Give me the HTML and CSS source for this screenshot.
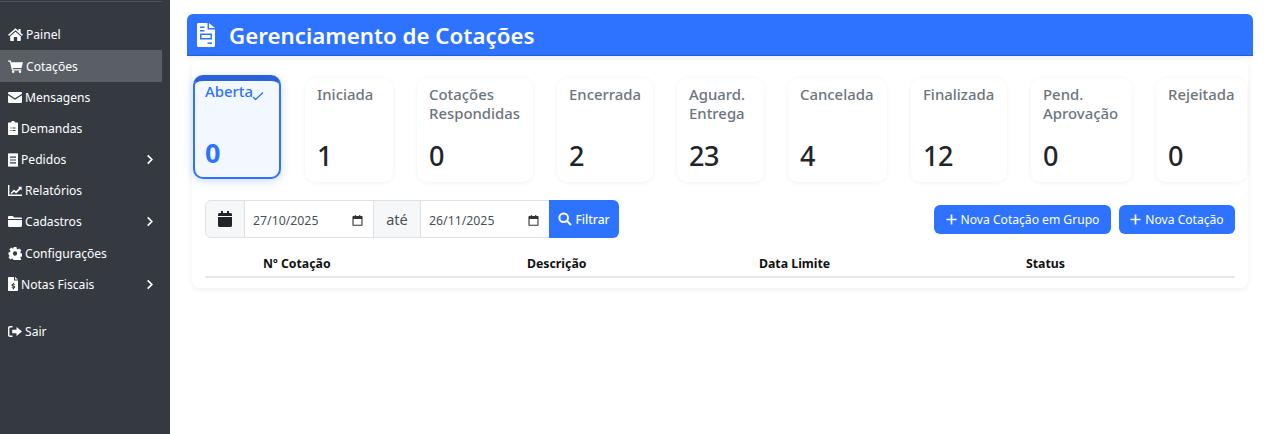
FILE: index.html
```html
<!DOCTYPE html>
<html lang="pt-BR">
<head>
<meta charset="utf-8">
<title>Gerenciamento de Cotações</title>
<link rel="stylesheet" href="styles.css">
</head>
<body>
<div class="app">
  <aside class="sidebar">
    <nav class="menu">
      <a class="item"><svg class="ic ic-15" viewBox="0 0 16 14"><path d="M8 .3 0 7.300l1 1.200L8 2.500l7 6 1-1.200-2.500-2.200V1h-2.300v2.100z"/><path d="M2.300 9 8 4l5.700 5v4.300c0 .4-.3.700-.7.700H9.800V9.800H6.200V14H3c-.4 0-.7-.3-.7-.7z"/></svg>Painel</a>
      <a class="item active"><svg class="ic ic-15" viewBox="0 0 16 14"><path d="M0 .6h3l.5 1.800H16l-1.500 6.200H5l.3 1.300h9v1.300H4.200L2 1.900H0z"/><circle cx="5.500" cy="12.700" r="1.300"/><circle cx="12.800" cy="12.700" r="1.300"/></svg>Cotações</a>
      <a class="item"><svg class="ic ic-14" viewBox="0 0 14 11"><path d="M1 0h12a1 1 0 0 1 1 1v.7L7 6.200 0 1.700V1a1 1 0 0 1 1-1z"/><path d="M0 3.200 7 7.700l7-4.500V10a1 1 0 0 1-1 1H1a1 1 0 0 1-1-1z"/></svg>Mensagens</a>
      <a class="item"><svg class="ic ic-9" viewBox="0 0 10 14"><path fill-rule="evenodd" d="M3 1.500C3 .7 3.900 0 5 0s2 .7 2 1.500h2c.6 0 1 .4 1 1V13c0 .6-.4 1-1 1H1c-.6 0-1-.4-1-1V2.500c0-.6.4-1 1-1zM2.500 6.500v1h1v-1zm2 0v1h3v-1zm-2 2.500v1h1V9zm2 0v1h3V9z"/></svg>Demandas</a>
      <a class="item"><svg class="ic ic-9" viewBox="0 0 10 14"><path fill-rule="evenodd" d="M0 0l1 .8L2 0l1 .8L4 0l1 .8L6 0l1 .8L8 0l1 .8L10 0v14l-1-.8-1 .8-1-.8-1 .8-1-.8-1 .8-1-.8-1 .8-1-.8-1 .8zM2 3.500v1.200h6V3.500zM2 6.400v1.200h6V6.400zM2 9.300v1.200h6V9.300z"/></svg>Pedidos<svg class="chev" viewBox="0 0 8 12"><path d="M1.500 1.500 6 6l-4.500 4.500"/></svg></a>
      <a class="item"><svg class="ic ic-14" viewBox="0 0 14 11"><path d="M0 0h1.400v9.500H14V11H0z"/><path d="M2.500 8 6 4.600l2 1.700L11.200 3 10 1.800h3.700v3.700l-1.300-1.300-4.300 4.300-2-1.700L3.500 9z"/></svg>Relatórios</a>
      <a class="item"><svg class="ic ic-14" viewBox="0 0 14 11"><path d="M0 1.200C0 .5.500 0 1.200 0h3.600L6.200 1.500h6.600c.7 0 1.200.5 1.200 1.200V3H0z"/><path d="M0 4h14v5.800c0 .7-.5 1.200-1.200 1.200H1.200C.5 11 0 10.500 0 9.800z"/></svg>Cadastros<svg class="chev" viewBox="0 0 8 12"><path d="M1.500 1.500 6 6l-4.500 4.500"/></svg></a>
      <a class="item"><svg class="ic ic-gear" viewBox="0 0 14 14"><path fill-rule="evenodd" d="M5.400 0h3.200l.3 2 1.200.6 1.700-1.100 2.100 2.200-1.200 1.700.5 1.200 1.800.4v3l-1.800.4-.5 1.200 1.100 1.600-2.200 2.200-1.600-1.100-1.200.5-.4 1.800H5.400L5 12.800l-1.200-.5-1.600 1.100L0 11.200l1.100-1.600-.5-1.200L-.1 8V5.900l1.800-.4.4-1.200L.9 2.600 3 .6l1.500 1.100 1-.4zM7 4.700a2.300 2.300 0 1 0 0 4.600 2.300 2.300 0 0 0 0-4.600z"/></svg>Configurações</a>
      <a class="item"><svg class="ic ic-9" viewBox="0 0 10 14"><path fill-rule="evenodd" d="M1 0h5v3.500h4V13c0 .6-.4 1-1 1H1c-.6 0-1-.4-1-1V1c0-.6.4-1 1-1zm6 0 3 2.600H7zM5 6v.8c-.9.1-1.500.6-1.500 1.400 0 1.600 2.200 1.100 2.200 1.900 0 .6-1.300.4-2 0v1c.4.200.9.300 1.300.300v.8h1v-.9c.8-.2 1.200-.7 1.200-1.400 0-1.600-2.200-1.100-2.200-1.900 0-.5 1-.4 1.800-.1v-1c-.3-.1-.5-.1-.8-.2V6z"/></svg>Notas Fiscais<svg class="chev" viewBox="0 0 8 12"><path d="M1.500 1.500 6 6l-4.500 4.500"/></svg></a>
      <a class="item logout"><svg class="ic ic-14" viewBox="0 0 14 11"><path d="M4.500 0H2C.9 0 0 .9 0 2v7c0 1.100.9 2 2 2h2.500V9.600H2c-.3 0-.6-.3-.6-.6V2c0-.3.3-.6.6-.6h2.500z"/><path d="M8.500 1 14 5.500 8.500 10V7.300H4.200V3.700h4.300z"/></svg>Sair</a>
    </nav>
  </aside>
  <main class="content">
    <header class="page-head">
      <svg class="head-ic" viewBox="0 0 18 24"><path fill-rule="evenodd" d="M1.500 0H10.500V6.500H18V22.500c0 .8-.7 1.500-1.500 1.500H1.500C.7 24 0 23.300 0 22.500V1.500C0 .7.700 0 1.500 0zM12 0l6 5h-6zM3 3.500v1.500h4.500V3.500zM3 7v1.500h4.500V7zM3 10.500v6h12v-6zM4.500 12h9v3h-9zM10.500 19.500V21H15v-1.500z"/></svg>
      <h1>Gerenciamento de Cotações</h1>
    </header>
    <section class="panel">
      <div class="cards">
        <div class="card selected c1"><div class="label">Aberta<svg class="check" viewBox="0 0 12 9"><path d="M1 5.500 3.500 8 11 1"/></svg></div><div class="value">0</div></div>
        <div class="card c2"><div class="label">Iniciada</div><div class="value">1</div></div>
        <div class="card c3"><div class="label">Cotações Respondidas</div><div class="value">0</div></div>
        <div class="card c4"><div class="label">Encerrada</div><div class="value">2</div></div>
        <div class="card c5"><div class="label">Aguard. Entrega</div><div class="value">23</div></div>
        <div class="card c6"><div class="label">Cancelada</div><div class="value">4</div></div>
        <div class="card c7"><div class="label">Finalizada</div><div class="value">12</div></div>
        <div class="card c8"><div class="label">Pend. Aprovação</div><div class="value">0</div></div>
        <div class="card c9"><div class="label">Rejeitada</div><div class="value">0</div></div>
      </div>
      <div class="toolbar">
        <div class="filter">
          <span class="addon icon-addon"><svg class="cal" viewBox="0 0 14 16"><path d="M3 0h2v2h4V0h2v2h1.500C13.300 2 14 2.700 14 3.500V5H0V3.500C0 2.700.7 2 1.500 2H3z"/><path d="M0 6h14v8.500c0 .8-.7 1.500-1.500 1.500h-11C.7 16 0 15.300 0 14.500z"/></svg></span>
          <span class="date d1">27/10/2025<svg class="picker" viewBox="0 0 12 12"><path d="M3 0h1.200v1.200h3.600V0H9v1.200h1.500c.5 0 1 .5 1 1v8.600c0 .5-.5 1-1 1h-9c-.5 0-1-.5-1-1V2.200c0-.5.5-1 1-1H3zM1.700 4.300v6.300h8.600V4.300z"/></svg></span>
          <span class="addon until">até</span>
          <span class="date d2">26/11/2025<svg class="picker" viewBox="0 0 12 12"><path d="M3 0h1.200v1.200h3.600V0H9v1.200h1.500c.5 0 1 .5 1 1v8.600c0 .5-.5 1-1 1h-9c-.5 0-1-.5-1-1V2.200c0-.5.5-1 1-1H3zM1.700 4.300v6.300h8.600V4.300z"/></svg></span>
          <button class="btn-filter"><svg class="search" viewBox="0 0 14 14"><circle cx="5.700" cy="5.700" r="4.300"/><path d="M9 9l4 4"/></svg>Filtrar</button>
        </div>
        <div class="actions">
          <button class="btn-new group"><svg class="plus" viewBox="0 0 12 12"><path d="M6 .5v11M.5 6h11"/></svg>Nova Cotação em Grupo</button>
          <button class="btn-new single"><svg class="plus" viewBox="0 0 12 12"><path d="M6 .5v11M.5 6h11"/></svg>Nova Cotação</button>
        </div>
      </div>
      <div class="table-head">
        <span>Nº Cotação</span><span>Descrição</span><span>Data Limite</span><span>Status</span>
      </div>
    </section>
  </main>
</div>
</body>
</html>
```
FILE: styles.css
```css
* { box-sizing: border-box; }
html, body { margin: 0; height: 100%; }
body { background: #fff; font-family: "Noto Sans", "Open Sans", sans-serif; color: #212529; overflow: hidden; }
.app { display: flex; height: 434px; }

.sidebar { width: 170px; flex: none; background: #343a40; padding-top: 1px; }
.menu { display: flex; flex-direction: column; width: 162px; border-top: 1px solid #4b5157; padding-top: 17.320px; }
.item { display: flex; align-items: center; height: 31.180px; padding-left: 8px; color: #fff; font-size: 12.100px; position: relative; }
.item.active { background: #5a5f65; }
.item.logout { margin-top: 16.100px; }
.ic { fill: #fff; margin-right: 3px; flex: none; }
.ic-15 { width: 15px; height: 13px; }
.ic-14 { width: 14px; height: 11px; }
.ic-gear { width: 14px; height: 13px; }
.ic-9 { width: 10px; height: 14px; }
.chev { position: absolute; right: 8px; top: 10px; width: 8px; height: 11px; fill: none; stroke: #fff; stroke-width: 1.800; }

.content { flex: 1; padding: 14px 17px 0; }
.page-head { height: 42px; background: #2e73ff; border-bottom: 1px solid #1d5fdc; border-radius: 6px 6px 0 0; display: flex; align-items: center; padding-left: 10px; box-shadow: 0 2px 4px rgba(0, 0, 0, .06); }
.head-ic { width: 18px; height: 24px; fill: #fff; margin-right: 14px; }
h1 { margin: 0; padding-top: 2px; color: #fff; font-size: 22.300px; font-weight: 600; }

.panel { margin: 4px 5px 0; height: 228px; border-radius: 8px; box-shadow: 0 1px 6px rgba(0, 0, 0, .07); padding: 15px 1px 0; }
.cards { display: flex; gap: 24px; align-items: flex-start; }
.card { height: 104px; margin-top: 3px; border-radius: 10px; padding: 7px 12px 8px; box-shadow: 0 1px 5px rgba(0, 0, 0, .06); display: flex; flex-direction: column; justify-content: space-between; background: #fff; flex: none; }
.label { font-size: 14.900px; font-weight: 500; color: #6c757d; line-height: 19px; position: relative; }
.value { font-size: 27px; font-weight: 500; letter-spacing: -.5px; line-height: 36px; color: #212529; }
.card.selected { margin-top: 0; background: #f3f7ff; border: 2px solid #2e73ff; border-top: 6px solid #2a62d9; padding: 1px 10px 6px; box-shadow: 0 2px 10px rgba(46, 115, 255, .25); }
.selected .label, .selected .value { color: #2e73ff; }
.selected .value { font-weight: 700; }
.check { position: absolute; left: 47px; top: 9px; width: 12px; height: 10px; fill: none; stroke: #2e73ff; stroke-width: 1.300; }
.c1 { width: 88px; } .c2 { width: 88px; } .c3 { width: 116px; } .c4 { width: 96px; } .c5 { width: 87px; }
.c6 { width: 99px; } .c7 { width: 96px; } .c8 { width: 101px; } .c9 { width: 91px; }

.toolbar { display: flex; justify-content: space-between; align-items: flex-start; margin: 18px 12px 0 12px; }
.filter { display: flex; height: 38px; }
.addon { display: flex; align-items: center; justify-content: center; background: #f6f7f9; border: 1px solid #dee2e6; color: #495057; font-size: 14.500px; }
.icon-addon { width: 40px; border-radius: 6px 0 0 6px; }
.until { width: 48px; margin-left: -1px; }
.cal { width: 14px; height: 16px; fill: #212529; }
.date { display: flex; align-items: center; justify-content: space-between; width: 130px; margin-left: -1px; border: 1px solid #dee2e6; padding: 2px 10px 0 8px; font-size: 12.300px; color: #495057; background: #fff; }
.picker { width: 11px; height: 11px; fill: #333; }
.btn-filter { width: 70px; margin-left: -1px; border: 0; border-radius: 0 6px 6px 0; background: #2e73ff; color: #fff; font: 500 12px "Noto Sans", sans-serif; display: flex; align-items: center; justify-content: center; gap: 3px; padding: 0; }
.search { width: 14px; height: 14px; fill: none; stroke: #fff; stroke-width: 2; }
.actions { display: flex; gap: 8px; padding-top: 5px; }
.btn-new { height: 29px; border: 0; border-radius: 6px; background: #2e73ff; color: #fff; font: 400 12.100px "Noto Sans", sans-serif; display: flex; align-items: center; justify-content: center; gap: 4px; padding: 0; }
.group { width: 177px; }
.single { width: 116px; }
.plus { width: 11px; height: 11px; fill: none; stroke: #fff; stroke-width: 1.800; }

.table-head { display: grid; grid-template-columns: 264px 232px 267px 1fr; margin: 13px 12px 0 12px; padding: 0 0 1px 58px; height: 27px; align-items: center; border-bottom: 2px solid #e6e8ea; font-size: 12.300px; font-weight: 700; color: #111; }
```
